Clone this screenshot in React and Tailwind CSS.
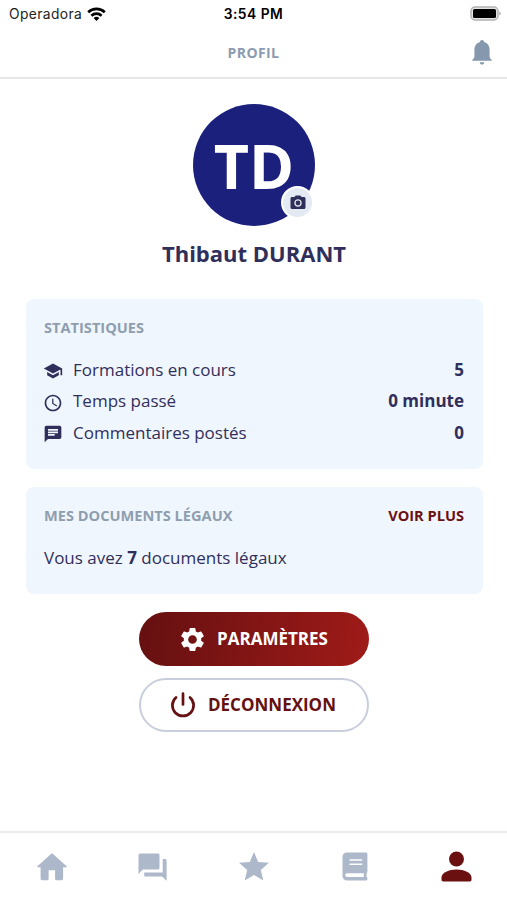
import { MdAccessTime, MdCameraAlt, MdChat, MdSchool, MdSettings, MdStar } from 'react-icons/md';

const stats = [
  { label: 'Formations en cours', value: '5', icon: MdSchool },
  { label: 'Temps passé', value: '0 minute', icon: MdAccessTime },
  { label: 'Commentaires postés', value: '0', icon: MdChat },
];

const BellIcon = ({ className }) => (
  <svg className={className} viewBox="0 0 20 25" fill="currentColor">
    <path d="M10 0c-1.200 0-2 .8-2 1.900C4.300 2.900 2.400 5.800 2.400 9.500v6.500c0 1.800-.7 2.700-2 3.700-.5.400-.5 1.100.2 1.100h18.800c.7 0 .7-.7.2-1.100-1.300-1-2-1.900-2-3.700V9.500c0-3.700-1.900-6.600-5.600-7.600C12 .8 11.200 0 10 0z" />
    <path d="M7.700 22.200h4.600c-.3 1.500-1.100 2.300-2.300 2.300s-2-.8-2.300-2.300z" />
  </svg>
);

const PowerIcon = ({ className }) => (
  <svg className={className} viewBox="0 0 26 26" fill="none" stroke="currentColor" strokeWidth="2.7" strokeLinecap="round">
    <path d="M13 1.700v10.800" />
    <path d="M6 5.400a10.600 10.600 0 1 0 14 0" />
  </svg>
);

const HomeIcon = ({ className }) => (
  <svg className={className} viewBox="0 0 30 28" fill="currentColor">
    <path d="M14.300.8.400 13.200c-.5.500-.3 1 .3 1h2.900v11.600c0 .9.600 1.500 1.500 1.500h5.200c.8 0 1.300-.5 1.300-1.300V17.200h6.500V26c0 .8.500 1.300 1.300 1.300h5.200c.9 0 1.500-.6 1.500-1.500V14.200h3.200c.6 0 .8-.5.300-1L15.700.8c-.4-.4-1-.4-1.400 0z" />
  </svg>
);

const ForumIcon = ({ className }) => (
  <svg className={className} viewBox="0 0 29 28" fill="currentColor">
    <path d="M2.200.5h17.600c1 0 1.700.7 1.700 1.700v12.600c0 1-.7 1.700-1.700 1.700H4.800L.5 21V2.200C.5 1.200 1.200.5 2.200.5z" />
    <path d="M24.700 6h2.200c1 0 1.700.7 1.700 1.700v20.100l-4.600-4.300H7.800c-1 0-1.600-.7-1.600-1.600v-2.300h18.500z" />
  </svg>
);

const BookIcon = ({ className }) => (
  <svg className={className} viewBox="0 0 26 29" fill="currentColor" fillRule="evenodd">
    <path d="M4.800.5h19.200c.8 0 1.400.6 1.400 1.400v17.800c0 .5-.3.900-.7 1.200-.3 1.200-.3 3 0 4.200.4.300.7.700.7 1.200v.8c0 .8-.6 1.400-1.400 1.400H5C2.400 28.500.5 26.600.5 24V5C.5 2.400 2.200.5 4.800.5zM8 7.200c-.4 0-.6.300-.6.800s.2.800.6.800h11.800c.4 0 .6-.3.600-.8s-.2-.8-.6-.8zm0 4.200c-.4 0-.6.300-.6.800s.2.800.6.800h11.800c.4 0 .6-.3.600-.8s-.2-.8-.6-.8zM5 21.300c-1 0-1.700.8-1.700 1.800s.7 1.800 1.700 1.800h16.800v-3.600z" />
  </svg>
);

const PersonIcon = ({ className }) => (
  <svg className={className} viewBox="0 0 31 31" fill="currentColor">
    <circle cx="15.500" cy="8" r="7.500" />
    <path d="M15.500 18.500c7.500 0 15 3.200 15 8v2.300c0 1-.7 1.700-1.700 1.700H2.200c-1 0-1.700-.7-1.700-1.700v-2.300c0-4.800 7.500-8 15-8z" />
  </svg>
);

const StatusBar = () => (
  <div className="relative flex h-[27px] items-center justify-between pl-[9px] pr-[6px] font-['Inter',sans-serif] text-black">
    <div className="flex items-center gap-[5px]">
      <span className="pt-px text-[13.8px] tracking-[0.4px] text-[#222]">Operadora</span>
      <svg width="19" height="14" viewBox="0 0 19 14" fill="none" stroke="currentColor" strokeWidth="2.6">
        <path d="M1.200 5.200a12 12 0 0 1 16.600 0" />
        <path d="M4.400 8.700a7.400 7.400 0 0 1 10.200 0" />
        <path d="M9.500 14 6.600 11.100a4.200 4.200 0 0 1 5.800 0z" fill="currentColor" stroke="none" />
      </svg>
    </div>
    <span className="absolute left-1/2 top-[4px] -translate-x-1/2 whitespace-nowrap text-[13.8px] font-semibold leading-[20px] tracking-[0.5px]">
      3:54 PM
    </span>
    <svg width="31" height="15" viewBox="0 0 31 15">
      <rect x="1" y="1" width="27" height="13" rx="4" fill="#e4e4e4" stroke="#b3b3b3" strokeWidth="1.500" />
      <rect x="3" y="3" width="23" height="9" rx="1.500" />
      <path d="M29.300 5.500v4q1.500-.5 1.500-2t-1.500-2" fill="#aaa" />
    </svg>
  </div>
);

const Header = () => (
  <header className="relative flex h-[52px] items-center justify-center border-b-2 border-[#e7e7e8]">
    <h1 className="text-[14px] font-bold tracking-[0.4px] text-[#8b9bb0]">PROFIL</h1>
    <BellIcon className="absolute right-[15px] top-[13px] h-[25px] w-[20px] text-[#8598ad]" />
  </header>
);

const Card = ({ title, action, children }) => (
  <section className="rounded-[8px] bg-[#f0f6fd] pl-[18px] pr-[19px]">
    <div className="flex h-[57px] items-center justify-between text-[14.6px] font-bold">
      <h3 className="text-[#8e9eaf]">{title}</h3>
      {action}
    </div>
    {children}
  </section>
);

const TabBar = () => (
  <nav className="grid h-[69px] grid-cols-5 place-items-center border-t-2 border-[#ececee] pl-px text-[#adb8ca]">
    <HomeIcon className="h-[28px] w-[30px]" />
    <ForumIcon className="h-[28px] w-[29px]" />
    <MdStar className="size-[36px]" />
    <BookIcon className="h-[29px] w-[26px]" />
    <PersonIcon className="size-[31px] text-[#6b1011]" />
  </nav>
);

export default function App() {
  return (
    <div className="flex h-[900px] w-[507px] flex-col overflow-hidden bg-white font-['Open_Sans',sans-serif] text-[#302f5b]">
      <StatusBar />
      <Header />

      <main className="flex flex-1 flex-col pl-[26px] pr-[25px] pt-[25px]">
        {/* Avatar */}
        <div className="relative mx-auto flex size-[122px] shrink-0 items-center justify-center rounded-full bg-[#1b207d]">
          <span className="text-[61px] font-bold leading-none text-white">TD</span>
          <div className="absolute bottom-[7px] right-[1px] flex size-[33px] items-center justify-center rounded-full border-2 border-white bg-[#e3eaf3]">
            <MdCameraAlt className="size-[18px]" />
          </div>
        </div>
        <h2 className="mt-[9px] text-center text-[22px] font-bold leading-[36px]">Thibaut DURANT</h2>

        <div className="-mr-px mt-[28px] flex flex-col gap-[18px]">
          <Card title="STATISTIQUES">
            <ul className="-mt-[2px] pb-[21px] text-[17px]">
              {stats.map(({ label, value, icon: Icon }) => (
                <li key={label} className="flex h-[31.4px] items-center">
                  <Icon className="mr-[10px] mt-[3px] -ml-px size-[20px]" />
                  <span>{label}</span>
                  <span className="ml-auto font-bold">{value}</span>
                </li>
              ))}
            </ul>
          </Card>
          <Card title="MES DOCUMENTS LÉGAUX" action={<a className="text-[#6b1011]">VOIR PLUS</a>}>
            <p className="pb-[22px] text-[17px] leading-[28px]">
              Vous avez <b>7</b> documents légaux
            </p>
          </Card>
        </div>

        {/* Actions */}
        <div className="mx-auto mt-[18px] flex w-[230px] flex-col gap-[12px] text-[17px] font-bold">
          <button className="flex h-[54px] items-center justify-center gap-[10px] rounded-full bg-linear-[100deg] from-[#651011] to-[#9f1b18] pr-[2px] text-white">
            <MdSettings className="size-[29px]" />
            PARAMÈTRES
          </button>
          <button className="flex h-[54px] items-center justify-center gap-[12px] rounded-full border-2 border-[#c8cedb] pr-[2px] text-[#651011]">
            <PowerIcon className="size-[26px]" />
            DÉCONNEXION
          </button>
        </div>
      </main>

      <TabBar />
    </div>
  );
}
